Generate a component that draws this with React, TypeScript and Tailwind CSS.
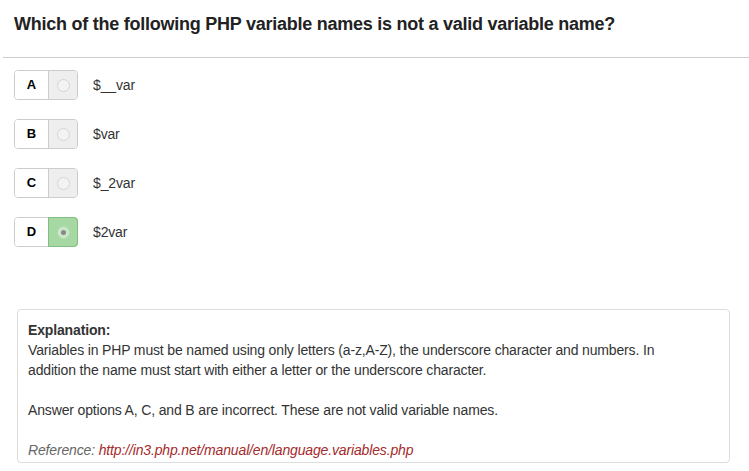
const options = [
  { key: "A", text: "$__var", correct: false },
  { key: "B", text: "$var", correct: false },
  { key: "C", text: "$_2var", correct: false },
  { key: "D", text: "$2var", correct: true },
]

function OptionRow({ letter, text, correct }: { letter: string; text: string; correct: boolean }) {
  return (
    <div className="flex h-[30px] items-center">
      <div className="flex h-full w-[64px] rounded-[4px] border border-[#cccccc]">
        <div className="flex w-[33px] items-center justify-center rounded-l-[3px] bg-white text-[13px] font-bold text-black">
          {letter}
        </div>
        <div
          className={
            correct
              ? "-my-px -mr-px flex flex-1 items-center justify-center rounded-r-[4px] border border-[#7fbf7f] bg-[#a6d8a3]"
              : "flex flex-1 items-center justify-center rounded-r-[3px] border-l border-[#cccccc] bg-[#eeeeee]"
          }
        >
          <span
            className={
              correct
                ? "flex h-[13px] w-[13px] items-center justify-center rounded-full border border-[#b5dcb3] bg-[#c9e8c7]"
                : "h-[13px] w-[13px] rounded-full border border-[#d4d4d4] bg-[#f3f3f3]"
            }
          >
            {correct && <span className="h-[5px] w-[5px] rounded-full bg-[#888888]" />}
          </span>
        </div>
      </div>
      <span className="ml-[15px] text-[14px] tracking-[-0.15px] text-[#333333]">{text}</span>
    </div>
  )
}

export default function App() {
  return (
    <div className="h-[471px] w-[749px] bg-white font-['Liberation_Sans',Arial,sans-serif] text-[#333333]">
      <div className="px-[14px] pt-[12px]">
        <h1 className="text-[18px] font-bold leading-[24px] tracking-[-0.25px] text-[#222222]">
          Which of the following PHP variable names is not a valid variable name?
        </h1>
      </div>
      <div className="ml-[3px] mt-[21px] h-px bg-[#cccccc]" />
      <div className="flex flex-col gap-[19px] px-[14px] pt-[12px]">
        {options.map((o) => (
          <OptionRow key={o.key} letter={o.key} text={o.text} correct={o.correct} />
        ))}
      </div>
      <div className="ml-[17px] mr-[19px] mt-[62px] rounded-[4px] border border-[#dddddd] px-[10px] pb-[2px] pt-[10px] text-[14px] leading-[20px] tracking-[-0.15px]">
        <div className="font-bold">Explanation:</div>
        <p>
          Variables in PHP must be named using only letters (a-z,A-Z), the underscore character and numbers. In
          <br />
          addition the name must start with either a letter or the underscore character.
        </p>
        <p className="mt-[20px]">Answer options A, C, and B are incorrect. These are not valid variable names.</p>
        <p className="mt-[20px] italic text-[#666666]">
          Reference: <span className="text-[#a52a2a]">http://in3.php.net/manual/en/language.variables.php</span>
        </p>
      </div>
    </div>
  )
}
